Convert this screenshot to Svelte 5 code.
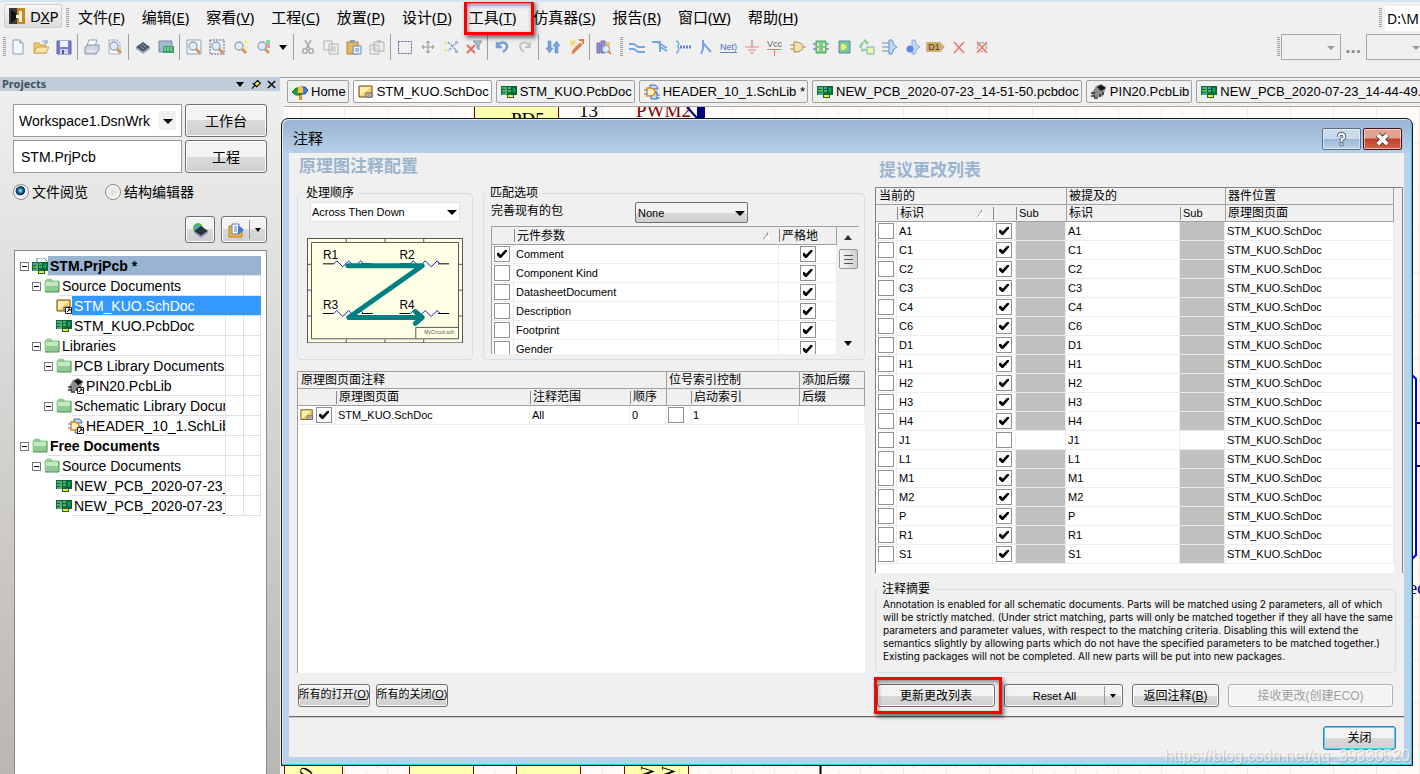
<script lang="ts">
	const menus = [
		['文件', 'F'],
		['编辑', 'E'],
		['察看', 'V'],
		['工程', 'C'],
		['放置', 'P'],
		['设计', 'D'],
		['工具', 'T'],
		['仿真器', 'S'],
		['报告', 'R'],
		['窗口', 'W'],
		['帮助', 'H']
	];

	const magnifier =
		'<circle cx="7" cy="7" r="4" fill="#dcefff" stroke="#8d9cb0" stroke-width="1.3"/><path d="M10 10l4 4" stroke="#c98a4a" stroke-width="2.6"/>';
	const board =
		'<path d="M0 2h16v9h-3v3H6v-3H0z" fill="#0d6b3c"/><path d="M1 4h3M1 7h3M1 10h3M5 3v8M7 4h3M7 7h3" stroke="#8ff0a8"/><path d="M11 3h4v6h-4z" fill="#1a9e55" stroke="#053"/><path d="M7 12h5" stroke="#ffe02e" stroke-width="2"/>';
	const chip =
		'<path d="M1 8l7-5 7 5-7 5z" fill="#3c4658"/><path d="M1 8l7 5v2L1 10zM15 8l-7 5v2l7-5z" fill="#8fa3bd"/><path d="M5 7l4 3M7 5l4 3" stroke="#8e9db5"/>';
	const shortcut = '<path d="M9.500 9.500h6v6h-6z" fill="#fff" stroke="#222"/><path d="M11 14l3-3M12 11h2v2" fill="none" stroke="#000"/>';
	const sheet = '<path d="M1 2h13v11H1z" fill="#f6d36b" stroke="#6b4b12"/><path d="M2 3h11L2 12z" fill="#fff0b0"/><path d="M8 9h6v4H8z" fill="#fbe59a" stroke="#5a4a8a"/><path d="M9.500 11h3" stroke="#5a4a8a"/>';
	const pcblib = '<path d="M5 2l5-2 5 3-3 9-9 2-2-5z" fill="#8b8b8b"/><path d="M6 3l4-2 5 3-5 3z" fill="#161616"/><path d="M0 9h4M0 12h4M3 14h4M9 10v3M12 8v3" stroke="#333" stroke-width="1.5"/>';
	const schlib = '<path d="M6 1h5q3 1 3 4H6zM7 9h6v6H7z" fill="#b8dcff" stroke="#3a6bc0"/><path d="M3 4h4q4 1 4 4t-4 4H3z" fill="#fff3c4" stroke="#e08418" stroke-width="1.4"/><path d="M0 6h3M0 10h3M11 8h3M13 11h3M13 14h3" stroke="#3a6bc0"/>';

	const icons: Record<string, string> = {
		blank: '<path d="M3 1h7l3 3v11H3z" fill="#f6fbff" stroke="#7e93ad"/><path d="M10 1v3h3" fill="#cfdcee" stroke="#7e93ad"/>',
		open: '<path d="M1 14V4h5l1 2h6v8z" fill="#f3c766" stroke="#c99a3c"/><path d="M1 14l3-6h12l-3 6z" fill="#ffe29a" stroke="#c99a3c"/><path d="M9 3q3-3 5 1m0-3v3h-3" fill="none" stroke="#6f93c8"/>',
		save: '<path d="M1 2h14v13H1z" fill="#6d6fd0" stroke="#5052a6"/><path d="M4 2h8v6H4z" fill="#eef3ff"/><path d="M4 10h8v5H4z" fill="#c9cde8"/><path d="M6 11h2v4H6z" fill="#444b90"/>',
		print: '<path d="M5 1h8l-2 6H3z" fill="#fff" stroke="#8896ab"/><path d="M1 8l3-2h11v5l-3 4H1z" fill="#c9d3e0" stroke="#7c8ba3"/><path d="M3 12h8" stroke="#fff"/>',
		preview: '<path d="M2 1h8l3 3v11H2z" fill="#f4f8fc" stroke="#a0acbc"/>' + magnifier,
		chip,
		boards: '<path d="M1 2h13v11H1z" fill="#9fb3cb" stroke="#6b8099"/><path d="M5 7h11v7H5z" fill="#2a9a5e"/><path d="M7 8v4M10 8v4M13 8v4" stroke="#a5efbb"/>',
		zoomDoc: '<path d="M1 1h14v14H1z" fill="#f2f7fc" stroke="#8a9ab0"/>' + magnifier,
		zoomArea: '<path d="M1 1h14v14H1z" fill="none" stroke="#4a5a80" stroke-dasharray="2 1"/>' + magnifier,
		zoomDots: magnifier + '<circle cx="14" cy="3" r="1.700" fill="#f5ea70"/><circle cx="14" cy="9" r="1.700" fill="#f5ea70"/>',
		zoomColor: magnifier + '<path d="M11 1h4v4h-4z" fill="#79d68a"/><path d="M11 5h4v4h-4z" fill="#f68aa8"/>',
		cut: '<path d="M5 1l5 9M11 1L6 10" stroke="#a7a7a7" stroke-width="1.600"/><circle cx="5" cy="12" r="2.300" fill="none" stroke="#a7a7a7" stroke-width="1.600"/><circle cx="11" cy="12" r="2.300" fill="none" stroke="#a7a7a7" stroke-width="1.600"/>',
		copy: '<path d="M1 2h8v9H1zM6 5h9v10H6z" fill="#f1f1f1" stroke="#aaa"/><path d="M8 8h5M8 10h5M8 12h5" stroke="#bbb"/>',
		paste: '<path d="M1 3h11v12H1z" fill="#e8b24d" stroke="#a97a2a"/><path d="M4 1h5v3H4z" fill="#8d97a8"/><path d="M7 7h8v8H7z" fill="#e9f2ff" stroke="#5c7db5"/><path d="M9 10h4M9 12h4" stroke="#5c7db5"/>',
		stamp: '<path d="M5 3h10v9H5zM1 6h9v9H1z" fill="#eee" stroke="#aaa"/><path d="M8 1h4v3H8z" fill="#bbb"/><path d="M3 9h5M3 11h5" stroke="#bbb"/>',
		marquee: '<path d="M1.500 2.500h13v12h-13z" fill="none" stroke="#43588c" stroke-dasharray="2 1"/>',
		move: '<path d="M8 2v12M2 8h12M6 4l2-2 2 2M6 12l2 2 2-2M4 6L2 8l2 2M12 6l2 2-2 2" fill="none" stroke="#888"/>',
		deselect: '<path d="M5 3l9 9M14 3l-9 9" stroke="#7c98d0" stroke-width="1.500" stroke-dasharray="3 1"/><circle cx="2.500" cy="4" r="1.500" fill="#efe373"/><circle cx="2.500" cy="11" r="1.500" fill="#efe373"/><path d="M12 2h3v3h-3zM12 11h3v3h-3z" fill="#9fb2cc"/>',
		clear: '<path d="M7 2h9l-3 4v5l-2-2V6z" fill="#a8bace" stroke="#7890aa"/><path d="M1 6l8 8M9 6l-8 8" stroke="#e8604c" stroke-width="2"/>',
		undo: '<path d="M3 3v5h5M3 8q3-6 8-4 5 4-2 9" fill="none" stroke="#6a94d4" stroke-width="2.500"/>',
		redo: '<path d="M13 3v5H8M13 8Q10 2 5 4q-5 4 2 9" fill="none" stroke="#c0c0c0" stroke-width="2"/>',
		updown: '<path d="M3 2h3v7h2l-3.500 5L1 9h2zM10 14h3V7h2l-3.500-5L8 7h2z" fill="#6c9ce4" stroke="#3e6cb8" stroke-width=".5"/>',
		wand: '<path d="M4 15l1-4 7-7 2 2-7 7z" fill="#e8703a" stroke="#b0502c" stroke-width=".5"/><path d="M5 0v8M1 4h8M2 1l6 6M8 1L2 7" stroke="#f4d23c"/><path d="M11 1h4v4" fill="none" stroke="#e8703a" stroke-width="2"/>',
		browse: '<path d="M1 4h3v10H1zM5 2h4v12H5z" fill="#8e86cf" stroke="#665fa8"/><path d="M10 3h4v11h-4z" fill="#e9bd68"/><circle cx="10" cy="10" r="3.500" fill="#dcefff" stroke="#8d9cb0"/><path d="M12 12l3 3" stroke="#c98a4a" stroke-width="2"/>',
		wire: '<path d="M0 5h5l4 3h7M0 10h5l4 3h7" fill="none" stroke="#6c9ce4" stroke-width="2"/>',
		bus: '<path d="M0 3h8v10M5 3l10 6M8 8l7 4" fill="none" stroke="#6c9ce4" stroke-width="2"/>',
		harness: '<path d="M1 2q4 1 2 5 2 6-2 7" fill="none" stroke="#5aa6e8" stroke-width="1.500"/><path d="M5 8h11" stroke="#5078d8" stroke-width="3" stroke-dasharray="2 1"/>',
		entry: '<path d="M5 1v9M5 4l8 9M5 10l-2 5" fill="none" stroke="#6c9ce4" stroke-width="2"/>',
		ground: '<path d="M8 1v7" stroke="#9a6b6b"/><path d="M1 8h14M4 11h8M6 14h4" stroke="#ee7468"/>',
		gate: '<path d="M4 3h3q6 1 6 5t-6 5H4z" fill="#f7dfa4" stroke="#a28345"/><path d="M0 6h4M0 10h4M13 8h3" stroke="#a28345"/>',
		symbol: '<path d="M3 2h10v12H3z" fill="#6acb86" stroke="#3c9a5c"/><path d="M0 5h4M0 10h4M12 5h4M12 10h4" stroke="#5a8ac8" stroke-width="1.500"/><path d="M4 4h2v3H4zM10 4h2v3h-2zM4 9h2v3H4zM10 9h2v3h-2z" fill="#eff08a"/>',
		sheetEntry: '<path d="M3 2h11v12H3z" fill="#6acb86" stroke="#4478b8"/><path d="M5 5h3l3 3-3 3H5z" fill="#f5ee6c"/>',
		device: '<path d="M5 1l4 4M1 9l3-6M2 11h5" stroke="#82cf92" stroke-width="2.500"/><path d="M8 8h7v7H8z" fill="#f6f3a2" stroke="#59a9c8"/>',
		harnessConn: '<path d="M7 1h3l2 5 3 2-3 2-2 5H7z" fill="#b9d6fb" stroke="#5a86c0"/><path d="M0 4h7M0 8h7M0 12h7" stroke="#5a86c0"/>',
		harnessEntry: '<path d="M7 1h3l2 5 3 2-3 2-2 5H7z" fill="#b9d6fb" stroke="#8fa8cc"/><circle cx="5" cy="10" r="3.500" fill="#4a7ee4"/>',
		cross: '<path d="M3 3l10 11M13 3L3 14" stroke="#f0685a" stroke-width="1.500"/>',
		noErc: '<circle cx="8" cy="8" r="4.500" fill="none" stroke="#999" stroke-width="1.500" stroke-dasharray="2 1"/><path d="M3 3l10 11M13 3L3 14" stroke="#f0685a" stroke-width="1.500"/>',
		home: '<path d="M7 8h3v8H7z" fill="#d9961c"/><path d="M0 8l4-4h4v7H4z" fill="#2f9d31" stroke="#176b1d"/><path d="M9 3h4l3 3-3 4H9z" fill="#3d82d8" stroke="#1c4c9c"/><path d="M6 4l3-3 2 3v5H6z" fill="#f6c53a"/>',
		sheet,
		board,
		schlib,
		pcblib,
		project: '<path d="M5 0h7l3 3v8H5z" fill="#fff" stroke="#6b84a8"/><g transform="translate(0 2)">' + board + '</g>',
		folder: '<path d="M1 14V3l2-2h4l2 2h6v11z" fill="#8fcb92"/><path d="M2 4h12v4H2z" fill="#c3e8c2"/><path d="M1 14V3l2-2h4l2 2h6" fill="none" stroke="#9ccf9c"/><path d="M15 3v11H1" fill="none" stroke="#4c9155"/>',
		sheetLink: sheet + shortcut,
		pcblibLink: pcblib + shortcut,
		schlibLink: schlib + shortcut,
		world: '<circle cx="6" cy="6" r="5" fill="#57b84e"/><path d="M3 3l4 1-1 4-3-1z" fill="#4aa0e6"/><path d="M2 9l7-5 7 5-7 5z" fill="#2b3342"/><path d="M2 9l7 5v2l-7-5zM16 9l-7 5v2l7-5z" fill="#8fa3bd"/>',
		explore: '<path d="M1 4h5l1 2h7v9H1z" fill="#f3b93a" stroke="#b27f18"/><path d="M4 2h7v10H4z" fill="#fff" stroke="#5c7db5"/><path d="M6 5h3M6 7h3M6 9h3" stroke="#5c7db5"/><path d="M10 3l6 5-6 5z" fill="#3c7ce0"/>',
		pin: '<path d="M3 14l4-5M4 6l6 6M6 7l5-5 4 4-5 5z" fill="#ffe96b" stroke="#000" stroke-width="1.500"/>'
	};

	// 'sep' draws a divider line, 'more' the small drop-down arrow
	const mainTools = [
		'blank', 'open', 'save', 'sep', 'print', 'preview', 'sep', 'chip', 'boards', 'sep',
		'zoomDoc', 'zoomArea', 'zoomDots', 'zoomColor', 'more', 'sep', 'cut', 'copy', 'paste', 'stamp', 'sep',
		'marquee', 'move', 'deselect', 'clear', 'sep', 'undo', 'redo', 'sep', 'updown', 'wand', 'sep', 'browse'
	];
	const wiringTools = [
		'wire', 'bus', 'harness', 'entry', 'net', 'ground', 'vcc', 'gate', 'symbol',
		'sheetEntry', 'device', 'harnessConn', 'harnessEntry', 'port', 'cross', 'noErc'
	];

	const tabs = [
		{ icon: 'home', label: 'Home' },
		{ icon: 'sheet', label: 'STM_KUO.SchDoc' },
		{ icon: 'board', label: 'STM_KUO.PcbDoc' },
		{ icon: 'schlib', label: 'HEADER_10_1.SchLib *' },
		{ icon: 'board', label: 'NEW_PCB_2020-07-23_14-51-50.pcbdoc' },
		{ icon: 'pcblib', label: 'PIN20.PcbLib' },
		{ icon: 'board', label: 'NEW_PCB_2020-07-23_14-44-49.' }
	];
	let activeTab = $state(1);

	const tree = [
		{ level: 0, icon: 'project', label: 'STM.PrjPcb *', open: true, bold: true, active: true },
		{ level: 1, icon: 'folder', label: 'Source Documents', open: true },
		{ level: 2, icon: 'sheetLink', label: 'STM_KUO.SchDoc' },
		{ level: 2, icon: 'board', label: 'STM_KUO.PcbDoc' },
		{ level: 1, icon: 'folder', label: 'Libraries', open: true },
		{ level: 2, icon: 'folder', label: 'PCB Library Documents', open: true },
		{ level: 3, icon: 'pcblibLink', label: 'PIN20.PcbLib' },
		{ level: 2, icon: 'folder', label: 'Schematic Library Documents', open: true },
		{ level: 3, icon: 'schlibLink', label: 'HEADER_10_1.SchLib' },
		{ level: 0, icon: 'folder', label: 'Free Documents', open: true, bold: true },
		{ level: 1, icon: 'folder', label: 'Source Documents', open: true },
		{ level: 2, icon: 'board', label: 'NEW_PCB_2020-07-23_14' },
		{ level: 2, icon: 'board', label: 'NEW_PCB_2020-07-23_14' }
	];
	let selectedNode = $state(2);

	let view = $state('files');
	let project = $state('STM.PrjPcb');

	let params = $state([
		{ name: 'Comment', use: true, strict: true },
		{ name: 'Component Kind', use: false, strict: true },
		{ name: 'DatasheetDocument', use: false, strict: true },
		{ name: 'Description', use: false, strict: true },
		{ name: 'Footprint', use: false, strict: true },
		{ name: 'Gender', use: false, strict: true }
	]);

	const names = ['A1', 'C1', 'C2', 'C3', 'C4', 'C6', 'D1', 'H1', 'H2', 'H3', 'H4', 'J1', 'L1', 'M1', 'M2', 'P', 'R1', 'S1'];
	let changes = $state(names.map((name) => ({ name, locked: false, sub: name !== 'J1' })));

	let sheetOn = $state(true);
	let indexOn = $state(false);
</script>

{#snippet icon(name: string)}
	{#if name === 'net'}
		<span class="glyph net">Net)</span>
	{:else if name === 'vcc'}
		<span class="glyph vcc">Vcc</span>
	{:else if name === 'port'}
		<span class="glyph port">D1</span>
	{:else}
		<svg class="icon" viewBox="0 0 16 16" fill="none" aria-hidden="true">{@html icons[name]}</svg>
	{/if}
{/snippet}

<div class="app">
	<nav class="menubar">
		<button class="dxp">
			<svg viewBox="0 0 18 18" aria-hidden="true">
				<path d="M1 1h8v16H1z" fill="#3a3a3a" />
				<path d="M9 1h8v16H9z" fill="#c78a22" />
				<path d="M3 3l5 3v6l-5 4z" fill="#111" />
				<path d="M8 8h3V4h3v11h-3v-4H8z" fill="#fff3d0" />
			</svg>
			<span>D<u>X</u>P</span>
		</button>
		<i class="grip"></i>
		<div class="menus">
			{#each menus as [label, key] (key)}
				<button class="menu" class:marked={key === 'T'}>{label}(<u>{key}</u>)</button>
			{/each}
		</div>
		<i class="grip"></i>
		<input class="path" aria-label="Path" value="D:\M" />
	</nav>

	<div class="toolbar">
		<i class="grip"></i>
		{#each mainTools as tool, i (i)}
			{#if tool === 'sep'}
				<i class="sep"></i>
			{:else if tool === 'more'}
				<button class="tool more" aria-label="more"><i class="arrow"></i></button>
			{:else}
				<button class="tool" aria-label={tool}>{@render icon(tool)}</button>
			{/if}
		{/each}
		<i class="grip wide"></i>
		{#each wiringTools as tool (tool)}
			<button class="tool" aria-label={tool}>{@render icon(tool)}</button>
		{/each}
		<div class="filters">
			<i class="grip"></i>
			<span class="mini"><select aria-label="Filter"><option></option></select></span>
			<button class="dots">...</button>
			<span class="mini"><select aria-label="Mask"><option></option></select></span>
		</div>
	</div>

	<div class="workspace">
		<aside class="panel">
			<header>
				<h2>Projects</h2>
				<button aria-label="Panel menu"><i class="arrow"></i></button>
				<button aria-label="Pin">{@render icon('pin')}</button>
				<button aria-label="Close panel">
					<svg class="x" viewBox="0 0 10 10" aria-hidden="true"><path d="M1 1l8 8M9 1L1 9" stroke="#000" stroke-width="1.500" /></svg>
				</button>
			</header>
			<div class="panel-form">
				<span class="drop workspace-pick">
					<select aria-label="Workspace"><option>Workspace1.DsnWrk</option></select>
				</span>
				<button class="btn">工作台</button>
				<input type="text" aria-label="Project" bind:value={project} />
				<button class="btn">工程</button>
			</div>
			<div class="views">
				<label><input type="radio" name="view" value="files" bind:group={view} />文件阅览</label>
				<label><input type="radio" name="view" value="structure" bind:group={view} />结构编辑器</label>
			</div>
			<div class="panel-actions">
				<button class="btn" aria-label="Refresh">{@render icon('world')}</button>
				<button class="btn split" aria-label="Explore">{@render icon('explore')}<i class="arrow small"></i></button>
			</div>
			<ul class="tree">
				{#each tree as node, i (i)}
					<li class="level-{node.level}" class:active={node.active} class:selected={i === selectedNode}>
						<i class={node.open ? 'toggle' : 'leaf'}></i>
						{@render icon(node.icon)}
						<button class:bold={node.bold} onclick={() => (selectedNode = i)}>{node.label}</button>
					</li>
				{/each}
			</ul>
		</aside>

		<main class="editor">
			<div class="tabs">
				{#each tabs as tab, i (i)}
					<button class:current={i === activeTab} onclick={() => (activeTab = i)}>
						{@render icon(tab.icon)}{tab.label}
					</button>
				{/each}
			</div>
			<svg class="canvas" aria-hidden="true">
				<defs>
					<pattern id="grid" width="43" height="43" patternUnits="userSpaceOnUse">
						<path d="M17.500 0v43M0 36.500h43" stroke="#efece8" />
						<path d="M39 4v3M39 18v3M39 32v3M6 15h3M26 15h3" stroke="#ebe8e4" />
					</pattern>
				</defs>
				<rect width="100%" height="100%" fill="#fffcf8" />
				<rect width="100%" height="100%" fill="url(#grid)" />
				<path d="M190.500-2h84v30h-84z" fill="#ffffb0" stroke="#800000" />
				<text x="227" y="19">PD5</text>
				<text x="295" y="10">13</text>
				<text x="352" y="10" class="net-label">PWM2</text>
				<path d="M403 0l10 11M420 0v12h-6V0z" stroke="#000080" stroke-width="2" fill="#000080" />
				<path d="M.500 655h58v20h-58zM125.500 655h64v20h-64zM232.500 655h64v20h-64zM340.500 655h64v20h-64z" fill="#ffffb0" stroke="#800000" />
				<text transform="translate(33 676) rotate(-120)">V</text>
				<text transform="translate(25 673) rotate(-60)">0</text>
				<text transform="translate(370 677) rotate(-90)">W</text>
				<text transform="translate(391 677) rotate(-90)">W</text>
				<path d="M536.500 655v20" stroke="#000" stroke-width="2" />
				<path d="M1128 268l4 4v176l-4 4" fill="none" stroke="#00f" stroke-width="2" />
				<path d="M1132 316h6M1132 359h6" stroke="#000080" stroke-width="2" />
				<text x="1112" y="487" class="blue">Rec</text>
			</svg>
		</main>
	</div>

	<section class="dialog" role="dialog" aria-label="注释">
		<header class="titlebar">
			<h1>注释</h1>
			<button class="win help" aria-label="Help">
				<svg viewBox="0 0 16 16" aria-hidden="true">
					<path d="M5 5q0-3 3-3t3 3q0 2-3 3v2" fill="none" stroke="#555f70" stroke-width="4" />
					<path d="M8 11v4" stroke="#555f70" stroke-width="4" />
					<path d="M5 5q0-3 3-3t3 3q0 2-3 3v2M8 12v2" fill="none" stroke="#fff" stroke-width="2" />
				</svg>
			</button>
			<button class="win close" aria-label="Close">
				<svg viewBox="0 0 16 16" aria-hidden="true">
					<path d="M3 3l10 10M13 3L3 13" stroke="#5b3230" stroke-width="6" />
					<path d="M3 3l10 10M13 3L3 13" stroke="#fff" stroke-width="4" />
				</svg>
			</button>
		</header>

		<div class="body">
			<div class="columns">
				<div class="left">
					<h3>原理图注释配置</h3>
					<div class="groups">
						<fieldset class="order">
							<legend>处理顺序</legend>
							<span class="drop flat"><select aria-label="处理顺序"><option>Across Then Down</option></select></span>
							<svg class="preview" viewBox="0 0 157 106" aria-hidden="true">
								<rect x=".5" y=".5" width="156" height="105" fill="#ffffe6" stroke="#555" />
								<path d="M4.500 4.500h148v97h-148zM109.500 101v-11h43M39.500 0v4M78.500 0v4M117.500 0v4M39.500 102v4M78.500 102v4M117.500 102v4M0 26.500h4M0 52.500h4M0 78.500h4M153 26.500h4M153 52.500h4M153 78.500h4" fill="none" stroke="#555" />
								{#each [[16, 26], [93, 26], [16, 76], [93, 76]] as [x, y] (`${x}-${y}`)}
									<path d="M{x} {y}h11M{x + 39} {y}h11" stroke="#000" />
									<path d="M{x + 11} {y}l3-3 6 6 6-6 6 6 6-6 3 3" fill="none" stroke="#1a1ad8" />
								{/each}
								<text x="16" y="21">R1</text>
								<text x="93" y="21">R2</text>
								<text x="16" y="71">R3</text>
								<text x="93" y="71">R4</text>
								<path d="M41 28h75L42 80h72M109 74l7 6-7 6" fill="none" stroke="#008080" stroke-width="5" stroke-linecap="round" stroke-linejoin="round" />
								<text x="118" y="97" class="tiny">MyCircuit.sch</text>
							</svg>
						</fieldset>

						<fieldset class="match">
							<legend>匹配选项</legend>
							<div class="complete">
								<label for="complete">完善现有的包</label>
								<span class="drop raised"><select id="complete"><option>None</option></select></span>
							</div>
							<div class="scroller">
								<table>
									<colgroup><col class="w22" /><col /><col class="w58" /></colgroup>
									<thead>
										<tr><th></th><th class="div">元件参数<i class="sort"></i></th><th class="div">严格地</th></tr>
									</thead>
									<tbody>
										{#each params as p (p.name)}
											<tr>
												<td class="box"><input type="checkbox" aria-label={p.name} bind:checked={p.use} /></td>
												<td>{p.name}</td>
												<td class="box mid"><input type="checkbox" aria-label="{p.name} 严格地" bind:checked={p.strict} /></td>
											</tr>
										{/each}
									</tbody>
								</table>
								<div class="scrollbar">
									<i class="arrow up"></i>
									<i class="thumb"></i>
									<i class="arrow"></i>
								</div>
							</div>
						</fieldset>
					</div>

					<div class="sheets">
						<table>
							<colgroup><col class="w38" /><col /><col class="w100" /><col class="w36" /><col class="w25" /><col class="w108" /><col class="w66" /></colgroup>
							<thead>
								<tr class="band"><th colspan="4">原理图页面注释</th><th colspan="2">位号索引控制</th><th>添加后缀</th></tr>
								<tr><th></th><th class="div">原理图页面</th><th class="div">注释范围</th><th class="div">顺序</th><th class="edge"></th><th class="div">启动索引</th><th class="edge">后缀</th></tr>
							</thead>
							<tbody>
								<tr>
									<td class="box pair">{@render icon('sheet')}<input type="checkbox" aria-label="STM_KUO.SchDoc" bind:checked={sheetOn} /></td>
									<td>STM_KUO.SchDoc</td>
									<td>All</td>
									<td>0</td>
									<td class="box"><input type="checkbox" aria-label="启动索引" bind:checked={indexOn} /></td>
									<td>1</td>
									<td></td>
								</tr>
							</tbody>
						</table>
					</div>
					<div class="actions all">
						<button class="btn"><span>所有的打开(<u>O</u>)</span></button>
						<button class="btn"><span>所有的关闭(<u>O</u>)</span></button>
					</div>
				</div>

				<div class="right">
					<h3>提议更改列表</h3>
					<div class="changes">
						<table>
							<colgroup><col class="w21" /><col class="w96" /><col class="w23" /><col class="w50" /><col class="w114" /><col class="w45" /><col /></colgroup>
							<thead>
								<tr class="band"><th colspan="4">当前的</th><th colspan="2">被提及的</th><th>器件位置</th></tr>
								<tr><th></th><th class="div">标识<i class="sort"></i></th><th class="div"></th><th class="div latin">Sub</th><th class="edge">标识</th><th class="div latin">Sub</th><th class="edge">原理图页面</th></tr>
							</thead>
							<tbody>
								{#each changes as c (c.name)}
									<tr>
										<td class="box"><input type="checkbox" aria-label={c.name} bind:checked={c.locked} /></td>
										<td>{c.name}</td>
										<td class="box mid"><input type="checkbox" aria-label="{c.name} Sub" bind:checked={c.sub} /></td>
										<td class:off={c.sub}></td>
										<td>{c.name}</td>
										<td class:off={c.sub}></td>
										<td>STM_KUO.SchDoc</td>
									</tr>
								{/each}
							</tbody>
						</table>
					</div>

					<fieldset class="summary">
						<legend>注释摘要</legend>
						<p>
							Annotation is enabled for all schematic documents. Parts will be matched using 2 parameters, all of which<br />
							will be strictly matched. (Under strict matching, parts will only be matched together if they all have the same<br />
							parameters and parameter values, with respect to the matching criteria. Disabling this will extend the<br />
							semantics slightly by allowing parts which do not have the specified parameters to be matched together.)<br />
							Existing packages will not be completed. All new parts will be put into new packages.
						</p>
					</fieldset>
					<div class="actions">
						<button class="btn update marked">更新更改列表</button>
						<button class="btn split reset"><span>Reset All</span><i class="arrow small"></i></button>
						<button class="btn back">返回注释(<u>B</u>)</button>
						<button class="btn accept" disabled>接收更改(创建ECO)</button>
					</div>
				</div>
			</div>
			<footer>
				<button class="btn default">关闭</button>
			</footer>
		</div>
	</section>

	<span class="watermark">https://blog.csdn.net/qq_39330520</span>
</div>

<style>
	:global(body) {
		margin: 0;
		background: #f0f0f0;
	}
	.app {
		position: relative;
		display: flex;
		flex-direction: column;
		height: 100vh;
		overflow: hidden;
		box-sizing: border-box;
		border-top: 2px solid #d6e3f0;
		background: #f0f0f0;
		color: #000;
		font: 12px/18px 'Liberation Sans', 'Noto Sans CJK SC', sans-serif;
	}
	.app :is(button, input, select) {
		box-sizing: border-box;
		margin: 0;
		padding: 0;
		border: 0;
		border-radius: 0;
		background: none;
		color: inherit;
		font: inherit;
	}
	h1,
	h2,
	h3,
	p,
	ul {
		margin: 0;
		padding: 0;
	}
	i {
		display: block;
		flex: none;
	}
	.icon {
		display: block;
		flex: none;
		width: 16px;
		height: 16px;
	}
	.grip {
		width: 3px;
		height: 20px;
		background: repeating-linear-gradient(#a0a0a0 0 1px, transparent 1px 2px);
	}
	.arrow {
		border: 4px solid transparent;
		border-top: 5px solid #000;
		border-bottom: 0;
	}
	.arrow.small {
		border-width: 3px;
		border-top-width: 4px;
		border-bottom: 0;
	}
	.arrow.up {
		border-top: 0;
		border-bottom: 5px solid #333;
	}

	/* menu bar */
	.menubar {
		display: flex;
		align-items: center;
		height: 32px;
		font: 15px/22px 'Noto Sans', 'Noto Sans CJK SC', sans-serif;
	}
	.app .dxp {
		display: flex;
		align-items: center;
		gap: 4px;
		width: 58px;
		height: 24px;
		margin: 0 4px 4px;
		padding: 0 3px;
		border: 1px solid #cfcfcf;
		border-radius: 2px;
		background: linear-gradient(#f6f6f6, #dcdcdc);
	}
	.dxp svg {
		flex: none;
		width: 18px;
	}
	.menus {
		display: flex;
		flex: 1;
		gap: 17px;
		padding: 0 0 2px 9px;
	}
	.menu {
		white-space: nowrap;
	}
	.marked {
		position: relative;
	}
	.marked::after {
		position: absolute;
		inset: -6px -18px -7px -5px;
		border: 3px solid #f00;
		box-shadow: 2px 3px 4px #0008, inset 1px 2px 4px #0007;
		content: '';
		pointer-events: none;
	}
	.app .path {
		width: 35px;
		height: 25px;
		margin-left: 3px;
		padding-left: 2px;
		background: #fff;
		font-size: 14px;
	}

	/* toolbar */
	.toolbar {
		display: flex;
		align-items: center;
		height: 26px;
		margin-bottom: 17px;
		padding-left: 3px;
	}
	.tool {
		display: grid;
		flex: none;
		place-items: center;
		width: 23px;
		height: 24px;
	}
	.tool .icon {
		opacity: 0.9;
	}
	.tool.more {
		width: 17px;
	}
	.sep {
		width: 1px;
		height: 26px;
		margin: 0 2px;
		background: #a0a0a0;
	}
	.grip.wide {
		margin: 0 2px 0 5px;
	}
	.glyph {
		font: 9px/10px 'Liberation Sans', sans-serif;
	}
	.glyph.net {
		border-bottom: 1px solid #5f7fb8;
		color: #4a70c0;
	}
	.glyph.vcc {
		padding-bottom: 7px;
		background: linear-gradient(#ee7468, #ee7468) no-repeat center 10px / 14px 1px, linear-gradient(#ee7468, #ee7468) no-repeat center 10px / 1px 8px;
		color: #666;
	}
	.glyph.port {
		padding: 0 5px 0 2px;
		background: #d0ac68;
		clip-path: polygon(0 0, 75% 0, 100% 50%, 75% 100%, 0 100%);
		color: #4c3a18;
	}
	.filters {
		display: flex;
		flex: 1;
		align-items: center;
		justify-content: flex-end;
	}
	.mini {
		position: relative;
		flex: none;
		width: 60px;
		height: 26px;
		margin-left: 1px;
		border: 1px solid #a8a8a8;
		box-sizing: border-box;
	}
	.mini:last-child {
		margin-right: -6px;
	}
	.mini::after {
		position: absolute;
		top: 11px;
		right: 5px;
		border: 4px solid transparent;
		border-top: 4px solid #999;
		border-bottom: 0;
		content: '';
	}
	.mini select {
		width: 100%;
		height: 100%;
		appearance: none;
	}
	.app .dots {
		padding: 0 4px;
		color: #888;
		font-size: 19px;
		font-weight: bold;
	}

	/* projects panel */
	.workspace {
		display: flex;
		flex: 1;
		min-height: 0;
	}
	.panel {
		display: flex;
		flex: none;
		flex-direction: column;
		width: 280px;
		background: linear-gradient(#f0f0f0, #bab6b1);
	}
	.panel header {
		display: flex;
		align-items: center;
		gap: 6px;
		height: 14px;
		padding: 0 4px 0 2px;
		background: #bfcddb;
	}
	.panel h2 {
		flex: 1;
		color: #43505c;
		font: bold 11px/14px 'Noto Sans', sans-serif;
	}
	.panel header .icon {
		width: 11px;
		height: 11px;
	}
	.x {
		display: block;
		width: 9px;
	}
	.panel-form {
		display: grid;
		grid-template-columns: 169px 82px;
		grid-auto-rows: 33px;
		gap: 3px;
		padding: 13px 13px 0;
		font-size: 14px;
	}
	.btn {
		overflow: hidden;
		white-space: nowrap;
	}
	.app .btn {
		border: 1px solid #707070;
		border-radius: 3px;
		background: linear-gradient(#f3f3f3 50%, #dadada 50%, #cfcfcf);
		box-shadow: inset 0 0 0 1px #fcfcfc;
	}
	.drop {
		position: relative;
		display: block;
	}
	.drop select {
		width: 100%;
		height: 100%;
		appearance: none;
	}
	.drop::after {
		position: absolute;
		top: 50%;
		right: 3px;
		margin-top: -2px;
		border: 5px solid transparent;
		border-top: 5px solid #000;
		border-bottom: 0;
		content: '';
		pointer-events: none;
	}
	.app .workspace-pick select {
		padding-left: 5px;
		border: 1px solid #999;
		background: linear-gradient(#f0f0f0, #f0f0f0) no-repeat 145px center / 17px 19px, #fff;
	}
	.workspace-pick::after {
		right: 9px;
	}
	.app .panel-form input {
		padding-left: 7px;
		border: 1px solid #999;
		background: #fff;
	}
	.views {
		display: flex;
		gap: 17px;
		padding: 10px 13px 0;
		font-size: 14px;
	}
	.views label {
		display: flex;
		align-items: center;
		gap: 3px;
	}
	.app .views input {
		width: 16px;
		height: 16px;
		border: 1px solid #888;
		border-radius: 50%;
		background: radial-gradient(#ddd, #fff);
		box-shadow: inset 0 0 0 1px #fff;
		appearance: none;
	}
	.app .views input:checked {
		background: radial-gradient(circle at 45% 40%, #b8e8ff, #1c6a9a 22%, #0a2c4a 38%, #e8eef2 45%);
	}
	.panel-actions {
		display: flex;
		justify-content: flex-end;
		gap: 6px;
		padding: 15px 13px 7px;
	}
	.panel-actions .btn {
		display: flex;
		align-items: center;
		justify-content: center;
		width: 30px;
		height: 27px;
	}
	.app .panel-actions .split {
		width: 46px;
		gap: 5px;
	}
	.split .arrow {
		position: relative;
		margin-left: 6px;
	}
	.split .arrow::before {
		position: absolute;
		top: -12px;
		left: -9px;
		width: 1px;
		height: 19px;
		background: #999;
		content: '';
	}
	.tree {
		flex: 1;
		margin: 0 13px 0 14px;
		padding: 5px 5px 0;
		border: 1px solid #8a8a8a;
		border-bottom: 0;
		background: #fff;
		list-style: none;
		font-size: 14px;
	}
	.tree li {
		display: flex;
		align-items: center;
		height: 20px;
	}
	.tree .level-1 {
		padding-left: 12px;
	}
	.tree .level-2 {
		padding-left: 24px;
	}
	.tree .level-3 {
		padding-left: 36px;
	}
	.toggle {
		width: 7px;
		height: 7px;
		margin-right: 3px;
		border: 1px solid #777;
		background: linear-gradient(#000, #000) no-repeat center / 5px 1px, #fff;
	}
	.leaf {
		width: 12px;
	}
	.app .tree button {
		flex: 1;
		min-width: 0;
		height: 20px;
		padding: 0 36px 0 2px;
		border-bottom: 1px solid #e0e0e0;
		background: linear-gradient(#e0e0e0, #e0e0e0) no-repeat right 17px top / 1px 100%, linear-gradient(#e0e0e0, #e0e0e0) no-repeat right 35px top / 1px 100%, linear-gradient(#e0e0e0, #e0e0e0) no-repeat right top / 1px 100%;
		overflow: clip;
		overflow-clip-margin: content-box;
		line-height: 20px;
		text-align: left;
		white-space: nowrap;
	}
	.app .tree .bold {
		font-weight: bold;
	}
	.app .tree .active button {
		background: #9ab3d0;
	}
	.app .tree .selected button {
		background: #3399ff;
		color: #fff;
	}

	/* editor */
	.editor {
		display: flex;
		flex: 1;
		flex-direction: column;
		min-width: 0;
		padding-left: 4px;
		border-top: 1px solid #a0a0a0;
	}
	.tabs {
		display: flex;
		flex: none;
		gap: 4px;
		padding: 2px 0 3px 3px;
		border-bottom: 1px solid #a8a8a8;
		overflow: hidden;
		font-size: 13px;
	}
	.app .tabs button {
		display: flex;
		flex: none;
		align-items: center;
		gap: 3px;
		height: 23px;
		padding: 0 2px 0 4px;
		border: 1px solid #a0a0a0;
		border-radius: 2px;
		white-space: nowrap;
	}
	.app .tabs .current {
		background: #fff;
	}
	.canvas {
		display: block;
		flex: 1;
		width: 100%;
		min-height: 0;
	}
	.canvas text {
		font: 19px 'Liberation Serif', serif;
	}
	.canvas .net-label {
		fill: #800000;
	}
	.canvas .blue {
		fill: #000080;
	}

	/* dialog */
	.dialog {
		position: absolute;
		top: 116px;
		right: 7px;
		left: 281px;
		border: 1px solid #1a1a1a;
		border-radius: 7px 7px 0 0;
		background: linear-gradient(#99b4d1, #b9d1ea 36px, #b9d1ea);
		box-shadow: inset -1px -1px #35c5e8, inset 1px 1px #dce9f6;
	}
	.titlebar {
		display: flex;
		align-items: center;
		gap: 2px;
		height: 34px;
		padding: 0 10px 0 11px;
	}
	.titlebar h1 {
		flex: 1;
		padding-top: 6px;
		font-size: 15px;
		font-weight: normal;
		line-height: 20px;
	}
	.app .win {
		display: grid;
		place-items: center;
		width: 39px;
		height: 22px;
		margin-top: 6px;
		border: 1px solid #5c6f86;
		border-radius: 2px;
		background: linear-gradient(#c8daec 50%, #9cb8d6 50%, #b9d1ea);
		box-shadow: inset 0 0 0 1px #fff8;
	}
	.win svg {
		width: 15px;
	}
	.app .close {
		border-color: #431422;
		background: linear-gradient(#e2a191 45%, #bd4128 50%, #d0664c);
	}
	.body {
		margin: 0 8px 8px 7px;
		background: #f0f0f0;
		font-size: 11px;
	}
	.columns {
		display: grid;
		grid-template-columns: minmax(0, 568fr) minmax(0, 528fr);
		gap: 10px;
		padding: 0 1px 9px 8px;
	}
	h3 {
		padding-left: 2px;
		color: #9ab3cf;
		font-size: 17px;
		line-height: 28px;
	}
	.right h3 {
		padding: 4px 0 2px 4px;
	}
	.groups {
		display: flex;
		gap: 10px;
		margin-top: 3px;
	}
	fieldset {
		min-width: 0;
		margin: 0;
		border: 1px solid #d5dfe5;
		border-radius: 4px;
	}
	legend {
		margin-left: -5px;
		padding: 0 4px;
		font-size: 12px;
		line-height: 18px;
	}
	.order {
		flex: none;
		width: 156px;
		padding: 0 9px 15px;
	}
	.drop.flat {
		height: 20px;
		margin: 0 3px 16px;
	}
	.app .flat select {
		padding-left: 1px;
		border: 1px solid #e0e0e8;
		background: #fff;
	}
	.preview {
		display: block;
		width: 100%;
	}
	.preview text {
		font: 12px 'Liberation Sans', sans-serif;
	}
	.preview .tiny {
		fill: #555;
		font-size: 5px;
	}
	.match {
		flex: 1;
		padding: 0 5px 5px 7px;
	}
	.complete {
		display: flex;
		gap: 72px;
		margin-bottom: 3px;
	}
	.complete label {
		font-size: 12px;
	}
	.raised {
		width: 113px;
		height: 21px;
	}
	.app .raised select {
		padding-left: 2px;
		border: 1px solid #707070;
		border-radius: 2px;
		background: linear-gradient(#f3f3f3 50%, #dadada 50%, #cfcfcf);
	}
	.scroller {
		display: flex;
		height: 128px;
		border-top: 1px solid #a0a0a0;
		border-left: 1px solid #a0a0a0;
		box-sizing: border-box;
		background: #fff;
		overflow: hidden;
	}
	.scroller table {
		flex: 1;
		width: 0;
	}
	.scrollbar {
		display: flex;
		flex-direction: column;
		align-items: center;
		width: 22px;
		padding: 8px 0;
		box-sizing: border-box;
		background: #f0f0f0;
	}
	.thumb {
		width: 17px;
		height: 18px;
		margin: 9px 0 auto;
		border: 1px solid #979797;
		border-radius: 2px;
		background: repeating-linear-gradient(#555 0 1px, transparent 1px 4px) no-repeat center / 9px 9px, linear-gradient(90deg, #f5f5f5, #d0d0d0);
	}

	table {
		width: 100%;
		border-spacing: 0;
		table-layout: fixed;
	}
	.w21 { width: 21px; }
	.w22 { width: 22px; }
	.w23 { width: 23px; }
	.w25 { width: 25px; }
	.w36 { width: 36px; }
	.w38 { width: 38px; }
	.w45 { width: 45px; }
	.w50 { width: 50px; }
	.w58 { width: 58px; }
	.w66 { width: 66px; }
	.w96 { width: 96px; }
	.w100 { width: 100px; }
	.w108 { width: 108px; }
	.w114 { width: 114px; }
	th {
		height: 17px;
		padding: 0 0 0 3px;
		border-bottom: 1px solid #a0a0a0;
		background: #f0f0f0;
		font-size: 12px;
		font-weight: normal;
		line-height: 16px;
		text-align: left;
		white-space: nowrap;
	}
	th:last-child {
		border-right: 1px solid #a0a0a0;
	}
	th.div {
		background: linear-gradient(#888, #888) no-repeat 0 center / 1px 13px, #f0f0f0;
	}
	th.edge,
	.band th + th {
		padding-left: 2px;
		border-left: 1px solid #a0a0a0;
	}
	th.latin {
		font-size: 11px;
	}
	.sheets th,
	.changes th {
		height: 16px;
	}
	.sort {
		float: right;
		width: 7px;
		height: 8px;
		margin: 4px 9px 0 0;
		background: linear-gradient(125deg, #a0a0a0 50%, #fff 50%);
		clip-path: polygon(70% 0, 100% 100%, 0 100%);
	}
	td {
		height: 18px;
		padding: 0 0 0 2px;
		border-right: 1px solid #ececec;
		border-bottom: 1px solid #ececec;
		line-height: 18px;
		white-space: nowrap;
	}
	.off {
		background: #c0c0c0;
	}
	.box {
		padding-left: 2px;
		line-height: 0;
	}
	.box.mid {
		padding: 0;
		text-align: center;
	}
	.app input[type='checkbox'] {
		width: 16px;
		height: 16px;
		border: 1px solid #909090;
		background: #fff;
		vertical-align: middle;
		appearance: none;
	}
	input[type='checkbox']:checked::before {
		display: block;
		width: 10px;
		height: 8px;
		margin: 3px 2px;
		background: #000;
		clip-path: polygon(0 40%, 18% 35%, 36% 60%, 80% 0, 100% 0, 100% 18%, 42% 100%, 28% 100%, 0 65%);
		content: '';
	}
	.pair .icon {
		display: inline-block;
		width: 14px;
		height: 14px;
		margin-right: 2px;
		vertical-align: middle;
	}
	.sheets {
		height: 302px;
		margin-top: 11px;
		border: solid #a0a0a0;
		border-width: 1px 0 0 1px;
		box-sizing: border-box;
		background: #fff;
	}
	.changes {
		height: 386px;
		padding-right: 8px;
		border: solid #808080;
		border-width: 1px 1px 0;
		box-sizing: border-box;
		background: linear-gradient(#f0f0f0, #f0f0f0) no-repeat right / 8px 100%, #fff;
	}
	.summary {
		margin: 7px 7px 0 0;
		padding: 0 6px 9px 7px;
	}
	.summary p {
		font: 10px/13px Inter, sans-serif;
		white-space: nowrap;
	}
	.actions {
		display: flex;
		gap: 9px;
		margin-top: 11px;
	}
	.all {
		gap: 6px;
		padding-left: 1px;
	}
	.actions .btn {
		height: 23px;
		font-size: 12px;
	}
	.all .btn {
		display: flex;
		justify-content: center;
		width: 72px;
	}
	.app .all .btn {
		font-size: 11px;
	}
	.app .update {
		width: 118px;
		margin-left: 2px;
		overflow: visible;
	}
	.update::after {
		inset: -8px -8px -8px -4px;
	}
	.app .reset {
		display: flex;
		align-items: center;
		width: 119px;
		padding-right: 6px;
		font-size: 11px;
	}
	.reset span {
		flex: 1;
	}
	.back {
		width: 87px;
	}
	.app .accept {
		flex: 1;
		margin-right: 10px;
		border-color: #adb2b5;
		background: #f4f4f4;
		color: #a0a0a0;
	}
	footer {
		display: flex;
		justify-content: flex-end;
		padding: 9px 8px 7px;
		border-top: 1px solid #696969;
		box-shadow: inset 0 1px #c8c8c8;
	}
	.app .default {
		width: 73px;
		height: 24px;
		border-color: #3c7fb1;
		box-shadow: inset 0 0 0 1px #48d1f0;
		font-size: 12px;
	}
	.watermark {
		position: absolute;
		right: 10px;
		bottom: 9px;
		color: #f8f8f8c0;
		font-size: 16px;
		text-shadow: 1px 1px 1px #0003;
	}
</style>
